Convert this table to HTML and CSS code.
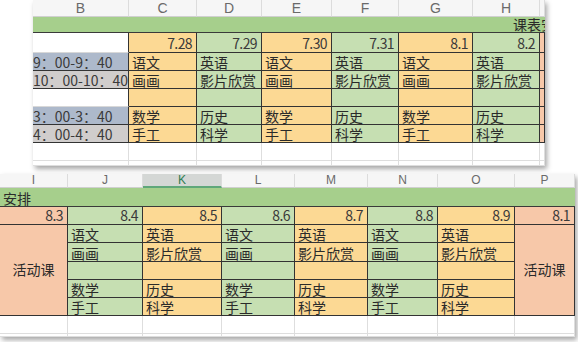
FILE: index.html
```html
<!DOCTYPE html>
<html lang="zh">
<head>
<meta charset="utf-8">
<link rel="stylesheet" href="styles.css">
</head>
<body>
<div class="page">
  <div class="sheet sheet-top">
    <div class="hd">B</div><div class="hd">C</div><div class="hd">D</div><div class="hd">E</div><div class="hd">F</div><div class="hd">G</div><div class="hd">H</div><div class="hd"></div>
    <div class="title title-right"><span>课表安排</span></div>

    <div class="c white"></div>
    <div class="c orange num">7.28</div>
    <div class="c green num">7.29</div>
    <div class="c orange num">7.30</div>
    <div class="c green num">7.31</div>
    <div class="c orange num">8.1</div>
    <div class="c green num">8.2</div>
    <div class="c salmon"></div>

    <div class="c blue time">9：00-9：40</div>
    <div class="c orange">语文</div><div class="c green">英语</div><div class="c orange">语文</div><div class="c green">英语</div><div class="c orange">语文</div><div class="c green">英语</div><div class="c salmon"></div>

    <div class="c grey time">10：00-10：40</div>
    <div class="c orange">画画</div><div class="c green">影片欣赏</div><div class="c orange">画画</div><div class="c green">影片欣赏</div><div class="c orange">画画</div><div class="c green">影片欣赏</div><div class="c salmon"></div>

    <div class="c white"></div>
    <div class="c orange"></div><div class="c green"></div><div class="c orange"></div><div class="c green"></div><div class="c orange"></div><div class="c green"></div><div class="c salmon"></div>

    <div class="c blue time">3：00-3：40</div>
    <div class="c orange">数学</div><div class="c green">历史</div><div class="c orange">数学</div><div class="c green">历史</div><div class="c orange">数学</div><div class="c green">历史</div><div class="c salmon"></div>

    <div class="c grey time">4：00-4：40</div>
    <div class="c orange">手工</div><div class="c green">科学</div><div class="c orange">手工</div><div class="c green">科学</div><div class="c orange">手工</div><div class="c green">科学</div><div class="c salmon"></div>

    <div class="e"></div><div class="e"></div><div class="e"></div><div class="e"></div><div class="e"></div><div class="e"></div><div class="e"></div><div class="e"></div>
    <div class="e"></div><div class="e"></div><div class="e"></div><div class="e"></div><div class="e"></div><div class="e"></div><div class="e"></div><div class="e"></div>
  </div>

  <div class="sheet sheet-bottom">
    <div class="hd">I</div><div class="hd">J</div><div class="hd sel">K</div><div class="hd">L</div><div class="hd">M</div><div class="hd">N</div><div class="hd">O</div><div class="hd">P</div>
    <div class="title"><span>安排</span></div>

    <div class="c salmon num">8.3</div>
    <div class="c green num">8.4</div>
    <div class="c orange num">8.5</div>
    <div class="c green num">8.6</div>
    <div class="c orange num">8.7</div>
    <div class="c green num">8.8</div>
    <div class="c orange num">8.9</div>
    <div class="c salmon num">8.1</div>

    <div class="c salmon merged">活动课</div>
    <div class="c green">语文</div><div class="c orange">英语</div><div class="c green">语文</div><div class="c orange">英语</div><div class="c green">语文</div><div class="c orange">英语</div>
    <div class="c salmon merged">活动课</div>

    <div class="c green">画画</div><div class="c orange">影片欣赏</div><div class="c green">画画</div><div class="c orange">影片欣赏</div><div class="c green">画画</div><div class="c orange">影片欣赏</div>

    <div class="c green"></div><div class="c orange"></div><div class="c green"></div><div class="c orange"></div><div class="c green"></div><div class="c orange"></div>

    <div class="c green">数学</div><div class="c orange">历史</div><div class="c green">数学</div><div class="c orange">历史</div><div class="c green">数学</div><div class="c orange">历史</div>

    <div class="c green">手工</div><div class="c orange">科学</div><div class="c green">手工</div><div class="c orange">科学</div><div class="c green">手工</div><div class="c orange">科学</div>

    <div class="e"></div><div class="e"></div><div class="e"></div><div class="e"></div><div class="e"></div><div class="e"></div><div class="e"></div><div class="e"></div>
    <div class="e"></div><div class="e"></div><div class="e"></div><div class="e"></div><div class="e"></div><div class="e"></div><div class="e"></div><div class="e"></div>
  </div>
</div>
</body>
</html>
```

FILE: styles.css
```css
* { box-sizing: border-box; }
html, body {
  margin: 0;
  padding: 0;
  background: #ffffff;
}
body {
  width: 578px;
  height: 342px;
  overflow: hidden;
  font-family: "Noto Sans CJK SC", "Noto Sans", sans-serif;
  color: #2a2a2a;
}
.page {
  display: flex;
  flex-direction: column;
  gap: 8px;
}
.sheet {
  display: grid;
  background: #fff;
  overflow: hidden;
  box-shadow: 2px 3px 5px rgba(0, 0, 0, 0.35);
}
.sheet-top {
  margin-left: 33px;
  width: 512px;
  grid-template-columns: 96px 68px 65px 70px 67px 74px 67px 5px;
  grid-template-rows: 17px 16px 20px 18px 18px 18px 18px 18px 18px 5px;
}
.sheet-bottom {
  width: 575px;
  grid-template-columns: 68px 75px 79px 73px 73px 70px 77px 60px;
  grid-template-rows: 14px 19px 18px 18px 19px 18px 18px 18px 18px 3px;
}
.hd {
  background: #f6f6f6;
  border-right: 1px solid #dcdcdc;
  border-bottom: 1px solid #d0d0d0;
  color: #6a6a6a;
  font-family: "Liberation Sans", sans-serif;
  font-size: 14px;
  line-height: 16px;
  text-align: center;
  overflow: hidden;
}
.sheet-bottom .hd {
  line-height: 13px;
  font-size: 12px;
}
.hd.sel {
  background: #d4d7d5;
  color: #2f7d52;
  border-bottom: 2px solid #5fa77a;
}
.title {
  grid-column: 1 / -1;
  background: #a6cf8c;
  border-bottom: 1px solid #3a3a3a;
  font-size: 14px;
  line-height: 15px;
  white-space: nowrap;
  overflow: hidden;
  display: flex;
  align-items: flex-end;
  padding-left: 3px;
}
.title-right {
  padding-left: 480px;
}
.c {
  border-right: 1px solid #333;
  border-bottom: 1px solid #333;
  font-size: 14px;
  line-height: 16px;
  padding-left: 3px;
  white-space: nowrap;
  overflow: hidden;
  display: flex;
  align-items: flex-end;
}
.num {
  justify-content: flex-end;
  padding-right: 4px;
  padding-bottom: 1px;
  font-size: 14px;
  letter-spacing: -0.6px;
  color: #3a3a3a;
}
.time {
  padding-left: 0;
  color: #3a3a3a;
}
.white { background: #ffffff; border-right-color: #d8d8d8; border-bottom-color: #d8d8d8; }
.sheet-top .white { border-right-color: #333; }
.orange { background: #fcd994; }
.green { background: #c6dfb2; }
.salmon { background: #f7c8a9; }
.blue { background: #adb9cb; }
.grey { background: #d0cdcc; }
.merged {
  grid-row: span 5;
  align-items: center;
  justify-content: center;
  padding-left: 0;
  padding-bottom: 2px;
}
.e {
  border-right: 1px solid #dedede;
  border-bottom: 1px solid #dedede;
}
```
